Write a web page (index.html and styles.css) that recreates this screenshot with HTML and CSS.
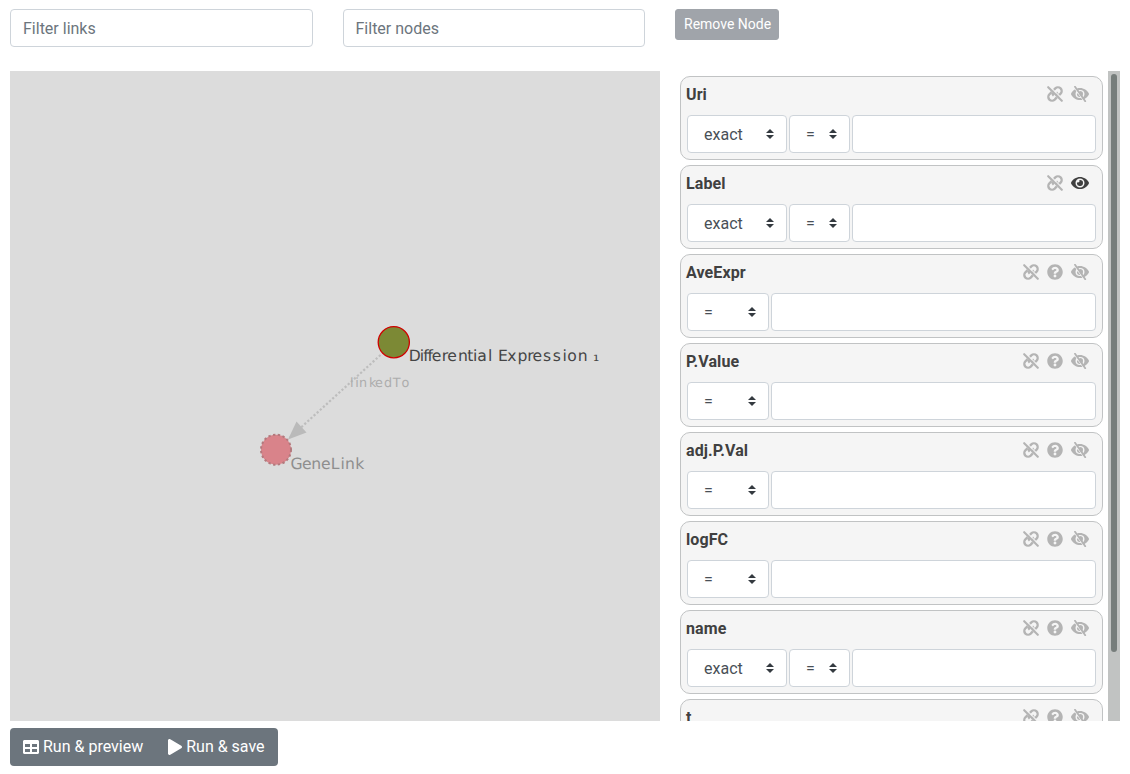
FILE: index.html
```html
<!DOCTYPE html>
<html lang="en">
<head>
<meta charset="utf-8">
<title>Query builder</title>
<link rel="stylesheet" href="styles.css">
</head>
<body>
<svg class="defs" width="0" height="0">
  <symbol id="eye" viewBox="0 0 576 512"><path d="M572.52 241.4C518.29 135.59 410.93 64 288 64S57.68 135.64 3.48 241.41a32.35 32.35 0 0 0 0 29.19C57.71 376.41 165.07 448 288 448s230.32-71.64 284.52-177.41a32.35 32.35 0 0 0 0-29.19zM288 400a144 144 0 1 1 144-144 143.93 143.93 0 0 1-144 144zm0-240a95.31 95.31 0 0 0-25.31 3.79 47.85 47.85 0 0 1-66.9 66.9A95.78 95.78 0 1 0 288 160z"/></symbol>
  <symbol id="slash" viewBox="0 0 576 512"><path class="lid" d="M40 256C150 60 426 60 536 256C426 452 150 452 40 256Z"/><path class="cut" d="M88 20L416 488" /><path class="stroke" d="M128 24L456 488"/></symbol>
  <symbol id="unlink" viewBox="0 0 16 16"><g class="chain"><path d="M6.2 4.6L8.3 2.4a3.7 3.7 0 0 1 5.3 5.3L11.4 9.8"/><path d="M9.8 11.4L7.7 13.6a3.7 3.7 0 0 1-5.3-5.3L4.6 6.2"/><path d="M9.3 6.3a3.4 3.4 0 0 1 1.2 2.6M6.7 9.7a3.4 3.4 0 0 1-1.2-2.6"/></g><path class="gap" d="M2.6 .2l13.2 13.2"/><path class="bar" d="M1.2 1.2l13.6 13.6"/></symbol>
  <symbol id="question" viewBox="0 0 512 512"><path d="M504 256c0 136.997-111.043 248-248 248S8 392.997 8 256C8 119.083 119.043 8 256 8s248 111.083 248 248zM262.655 90c-54.497 0-89.255 22.957-116.549 63.758-3.536 5.286-2.353 12.415 2.715 16.258l34.699 26.31c5.205 3.947 12.621 3.008 16.665-2.122 17.864-22.658 30.113-35.797 57.303-35.797 20.429 0 45.698 13.148 45.698 32.958 0 14.976-12.363 22.667-32.534 33.976C247.128 238.528 216 254.941 216 296v4c0 6.627 5.373 12 12 12h56c6.627 0 12-5.373 12-12v-1.333c0-28.462 83.186-29.647 83.186-106.667 0-58.002-60.165-102-116.531-102zM256 338c-25.365 0-46 20.635-46 46 0 25.364 20.635 46 46 46s46-20.636 46-46c0-25.364-20.635-46-46-46z"/></symbol>
</svg>
<main class="page">
  <div class="toolbar">
    <input class="control filter" placeholder="Filter links">
    <input class="control filter" placeholder="Filter nodes">
    <button class="remove">Remove Node</button>
  </div>
  <div class="workspace">
    <svg class="graph" viewBox="10 71 650 650">
      <path class="edge" d="M380.5 355L290 437.5"/>
      <path class="arrow" d="M288 439.5L296.5 421.5L306.5 432.5Z"/>
      <circle class="node-link" cx="276" cy="449.7" r="15"/>
      <circle class="node-main" cx="393.8" cy="342.2" r="15.6"/>
      <text class="edge-label" y="387" x="350 355.2 359 369 375 384 392.8 401.5">linkedTo</text>
      <text class="muted-label" y="469" x="290.5 302 311.3 321 330.7 340.5 345 355.3">GeneLink</text>
      <text class="main-label" y="361" x="408.8 419.8 423.2 427.6 431.7 441.7 447.2 458 467.2 473 477.2 488 492 498 507.3 517.6 527.3 532.5 542.9 552.7 562.6 567.3 577.7 587 593">Differential Expression ₁</text>
    </svg>
    <section class="attributes" id="attributes"></section>
    <div class="track"><div class="thumb"></div></div>
  </div>
  <div class="actions">
    <button class="action"><svg class="icon" viewBox="0 0 512 512" width="16" height="16"><path d="M464 32H48C21.49 32 0 53.49 0 80v352c0 26.51 21.49 48 48 48h416c26.51 0 48-21.49 48-48V80c0-26.51-21.49-48-48-48zM224 416H64v-96h160v96zm0-160H64v-96h160v96zm224 160H288v-96h160v96zm0-160H288v-96h160v96z"/></svg>Run &amp; preview</button>
    <button class="action"><svg class="icon" viewBox="0 0 448 512" width="14" height="16"><path d="M424.4 214.7L72.4 6.6C43.8-10.3 0 6.1 0 47.9V464c0 37.5 40.7 60.1 72.4 41.3l352-208c31.4-18.5 31.5-64.1 0-82.6z"/></svg>Run &amp; save</button>
  </div>
</main>
<script src="app.js"></script>
</body>
</html>
```
FILE: styles.css
```css
* { box-sizing: border-box; }
body { margin: 0; background: #fff; font: 16px/24px Roboto, sans-serif; color: #404040; overflow: hidden; }
button, input, select { font: inherit; margin: 0; }
.defs { position: absolute; }
.page { padding: 9px 10px 0; }
.toolbar { display: flex; gap: 30px; align-items: flex-start; height: 62px; }
.control { height: 38px; border: 1px solid #ced4da; border-radius: 4px; background: #fff; color: #495057; padding: 6px 12px; min-width: 0; }
.control::placeholder { color: #6c757d; opacity: 1; }
.filter { width: 302.5px; }
.remove { height: 31px; width: 104px; padding: 4px 8px; border: 1px solid #a0a4aa; border-radius: 3px; background: #a0a4aa; color: #fff; font-size: 14px; line-height: 21px; white-space: nowrap; }
.workspace { display: flex; height: 650px; }
.graph { width: 650px; height: 650px; background: #dcdcdc; flex: none; }
.edge { stroke: #bdbdbd; stroke-width: 2.2; stroke-dasharray: 2.2 2; }
.arrow { fill: #bababa; }
.node-link { fill: #d9838a; stroke: #b3797d; stroke-width: 2; stroke-dasharray: 2.4 2.4; }
.node-main { fill: #7c8935; stroke: #d00000; stroke-width: 1.3; }
.graph text { font-family: "DejaVu Sans", sans-serif; font-size: 15.6px; text-rendering: geometricPrecision; }
.graph .edge-label { font-size: 12.8px; fill: #adadad; }
.graph .muted-label { fill: #8e8e8e; }
.graph .main-label { fill: #454545; }
.attributes { width: 423px; margin-left: 20px; padding-top: 5px; display: flex; flex-direction: column; gap: 5px; overflow: hidden; }
.card { flex: none; height: 84px; border: 1px solid #c1c3c4; border-radius: 10px; background: #f5f5f5; padding: 5px; }
.card-head { display: flex; justify-content: space-between; height: 24px; }
.name { font-weight: 700; padding-top: 1px; letter-spacing: .1px; }
.icons { display: flex; align-items: center; gap: 8px; padding-right: 8px; color: #b4b4b4; }
.glyph { display: block; width: 16px; height: 16px; fill: currentColor; overflow: hidden; }
.glyph.wide { width: 18px; }
.glyph.on { color: #404040; }
.chain { fill: none; stroke: #b4b4b4; stroke-width: 2.3; }
.lid { fill: none; stroke: #b4b4b4; stroke-width: 36; }
.gap { stroke: #f5f5f5; stroke-width: 1.1; }
.cut { stroke: #f5f5f5; stroke-width: 34; }
.bar { stroke: #b4b4b4; stroke-width: 2.1; stroke-linecap: round; }
.stroke { stroke: #b4b4b4; stroke-width: 58; stroke-linecap: round; }
.fields { display: flex; gap: 2px; padding: 9px 1px 0; }
.select { appearance: none; padding: 7px 16px 5px; background: #fff url("data:image/svg+xml,%3Csvg xmlns='http://www.w3.org/2000/svg' viewBox='0 0 4 5'%3E%3Cpath fill='%23343a40' d='M2 0L0 2h4zm0 5L0 3h4z'/%3E%3C/svg%3E") no-repeat right 12px center / 8px 10px; }
.kind { width: 100px; }
.sign { width: 61px; }
.sign.only { width: 82px; }
.value { flex: 1; }
.track { width: 12px; margin-left: 5px; padding: 3px; background: #c1c3c2; }
.thumb { width: 6px; height: 578px; border-radius: 3px; background: #767d7b; }
.actions { display: inline-flex; margin-top: 7px; border-radius: 4px; background: #6c757d; overflow: hidden; }
.action { display: flex; align-items: center; gap: 4px; height: 38px; padding: 0 12px 0 13px; border: 0; background: none; color: #fff; white-space: nowrap; }
.action:last-child { padding-right: 13px; }
.icon { fill: #fff; }
```
FILE: app.js
```js
const attributes = [
  { name: "Uri", text: true },
  { name: "Label", text: true, visible: true },
  { name: "AveExpr", optional: true },
  { name: "P.Value", optional: true },
  { name: "adj.P.Val", optional: true },
  { name: "logFC", optional: true },
  { name: "name", text: true, optional: true },
  { name: "t", optional: true }
];
const glyph = (id, extra = "") => `<svg class="glyph ${extra}"><use href="#${id}"/></svg>`;
const hiddenEye = `<svg class="glyph wide"><use href="#eye"/><use href="#slash"/></svg>`;
document.getElementById("attributes").innerHTML = attributes.map(a => `
  <article class="card">
    <div class="card-head"><span class="name">${a.name}</span>
      <span class="icons">${glyph("unlink")}${a.optional ? glyph("question") : ""}${a.visible ? glyph("eye", "wide on") : hiddenEye}</span>
    </div>
    <div class="fields">
      ${a.text ? '<select class="control select kind"><option>exact</option></select>' : ""}
      <select class="control select sign ${a.text ? "" : "only"}"><option>=</option></select>
      <input class="control value">
    </div>
  </article>`).join("");
```
